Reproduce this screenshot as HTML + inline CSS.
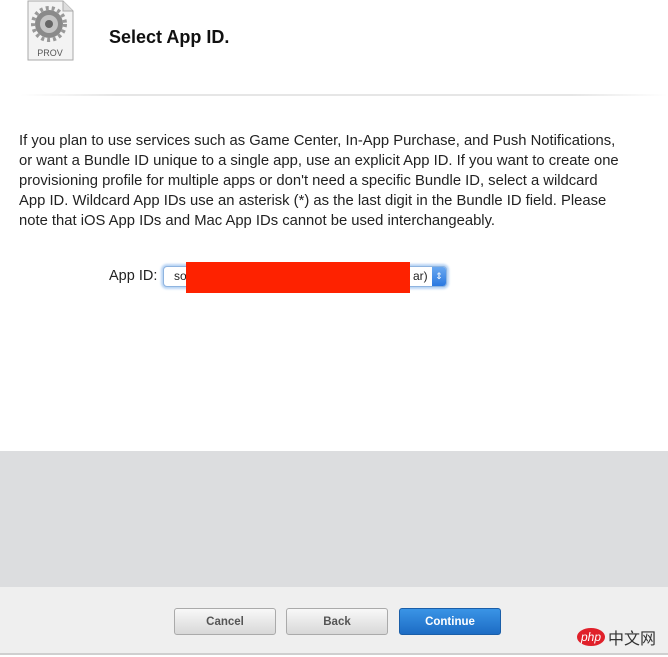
<!DOCTYPE html>
<html><head><meta charset="utf-8"><style>
body{margin:0;width:668px;height:657px;background:#fff;font-family:"Liberation Sans",sans-serif;position:relative;overflow:hidden;color:#222}
.abs{position:absolute}
.title{left:109px;top:27px;font-size:18px;font-weight:bold;color:#111}
.sep{left:20px;top:94px;width:648px;height:2px;background:linear-gradient(to right,#fff,#e6e6e6 15%,#e6e6e6 85%,#fff)}
.para{left:19px;top:131px;font-size:14.8px;line-height:20px;white-space:nowrap;color:#222}
.lbl{left:109px;top:268px;font-size:14.5px}
.sel{left:163px;top:266px;width:282px;height:19px;border:1px solid #8fb4e0;border-radius:4px;box-shadow:0 0 2px 2px #b8d4f4;background:#fff;font-size:12px}
.red{left:186px;top:262px;width:224px;height:31px;background:#fe2200}
.gray{left:0;top:451px;width:668px;height:136px;background:#dcdddf}
.foot{left:0;top:587px;width:668px;height:66px;background:#efefef;border-bottom:2px solid #cfcfcf}
.btn{top:608px;height:25px;width:100px;border:1px solid #aaa;border-radius:3px;background:linear-gradient(#f8f8f8,#d8d8d8);font-size:11.5px;font-weight:bold;color:#555;text-align:center;line-height:26px}
</style></head><body>
<svg class="abs" style="left:27px;top:0" width="48" height="62" viewBox="0 0 48 62">
<path d="M1 1H36L46 11V60H1Z" fill="#f3f3f3" stroke="#aaa"/>
<path d="M36 1V11H46" fill="#ddd" stroke="#aaa"/>
<circle cx="22" cy="24" r="14" fill="#8a8a8a"/>
<circle cx="22" cy="24" r="16" fill="none" stroke="#999" stroke-width="4" stroke-dasharray="3 3"/>
<circle cx="22" cy="24" r="9" fill="#c4c4c4"/>
<circle cx="22" cy="24" r="4" fill="#666"/>
<text x="23" y="56" font-size="9" font-family="Liberation Sans" text-anchor="middle" fill="#555">PROV</text>
</svg>
<div class="abs title">Select App ID.</div>
<div class="abs sep"></div>
<div class="abs para">If you plan to use services such as Game Center, In-App Purchase, and Push Notifications,<br>or want a Bundle ID unique to a single app, use an explicit App ID. If you want to create one<br>provisioning profile for multiple apps or don't need a specific Bundle ID, select a wildcard<br>App ID. Wildcard App IDs use an asterisk (*) as the last digit in the Bundle ID field. Please<br>note that iOS App IDs and Mac App IDs cannot be used interchangeably.</div>
<div class="abs lbl">App ID:</div>
<div class="abs sel"><span style="position:absolute;left:10px;top:2px">so</span><span style="position:absolute;left:249px;top:2px">ar)</span><span style="position:absolute;right:0;top:0;width:14px;height:19px;background:linear-gradient(#6aa8f0,#2a78e0);border-radius:0 3px 3px 0;color:#fff;font-size:9px;text-align:center;line-height:19px">⇕</span></div>
<div class="abs red"></div>
<div class="abs gray"></div>
<div class="abs foot"></div>
<div class="abs btn" style="left:174px">Cancel</div>
<div class="abs btn" style="left:286px">Back</div>
<div class="abs btn" style="left:399px;background:linear-gradient(#3a94e6,#1d6cc4);border-color:#1a5ea8;color:#fff">Continue</div>
<div class="abs" style="left:577px;top:628px;width:28px;height:18px;border-radius:50%;background:#e0202a;color:#fff;font-size:12px;font-style:italic;text-align:center;line-height:18px">php</div>
<div class="abs" style="left:608px;top:627px;font-size:16px;font-family:'Noto Sans CJK SC',sans-serif;color:#333;line-height:20px">中文网</div>
</body></html>
